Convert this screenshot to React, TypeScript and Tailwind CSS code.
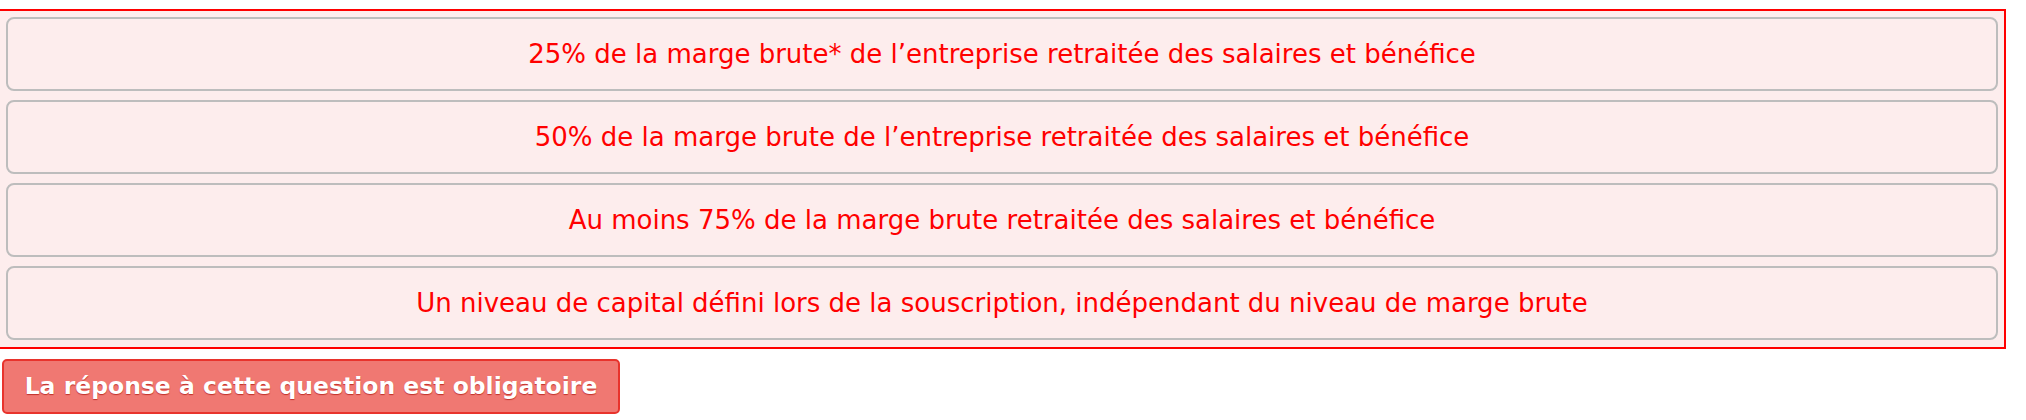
import React from 'react';

const options = [
  '25% de la marge brute* de l’entreprise retraitée des salaires et bénéfice',
  '50% de la marge brute de l’entreprise retraitée des salaires et bénéfice',
  'Au moins 75% de la marge brute retraitée des salaires et bénéfice',
  'Un niveau de capital défini lors de la souscription, indépendant du niveau de marge brute'
];

export default function App() {
  return (
    <div className="w-[2026px] h-[420px] bg-white font-['DejaVu_Sans',Verdana,sans-serif]">
      <div className="pt-[9px]">
        <div className="ml-[-2px] w-[2008px] border-2 border-[#ff0000] bg-[#fdeded] px-[6px] pt-[6px] pb-[7px] flex flex-col gap-[9px]">
          {options.map((label) => (
            <button
              key={label}
              type="button"
              className="h-[74px] w-full rounded-[8px] border-2 border-[#bdbdbd] bg-[#fdeded] text-[26px] text-[#ff0000] flex items-center justify-center">
              {label}
            </button>
          ))}
        </div>
      </div>
      <div className="pl-[2px] pt-[10px]">
        <button
          type="button"
          className="h-[55px] w-[618px] rounded-[5px] border-2 border-[#e8332c] bg-[#f07872] text-white font-bold text-[23.5px] [text-shadow:0_1px_1px_#c0302a] flex items-center justify-center">
          La réponse à cette question est obligatoire
        </button>
      </div>
    </div>
  );
}
